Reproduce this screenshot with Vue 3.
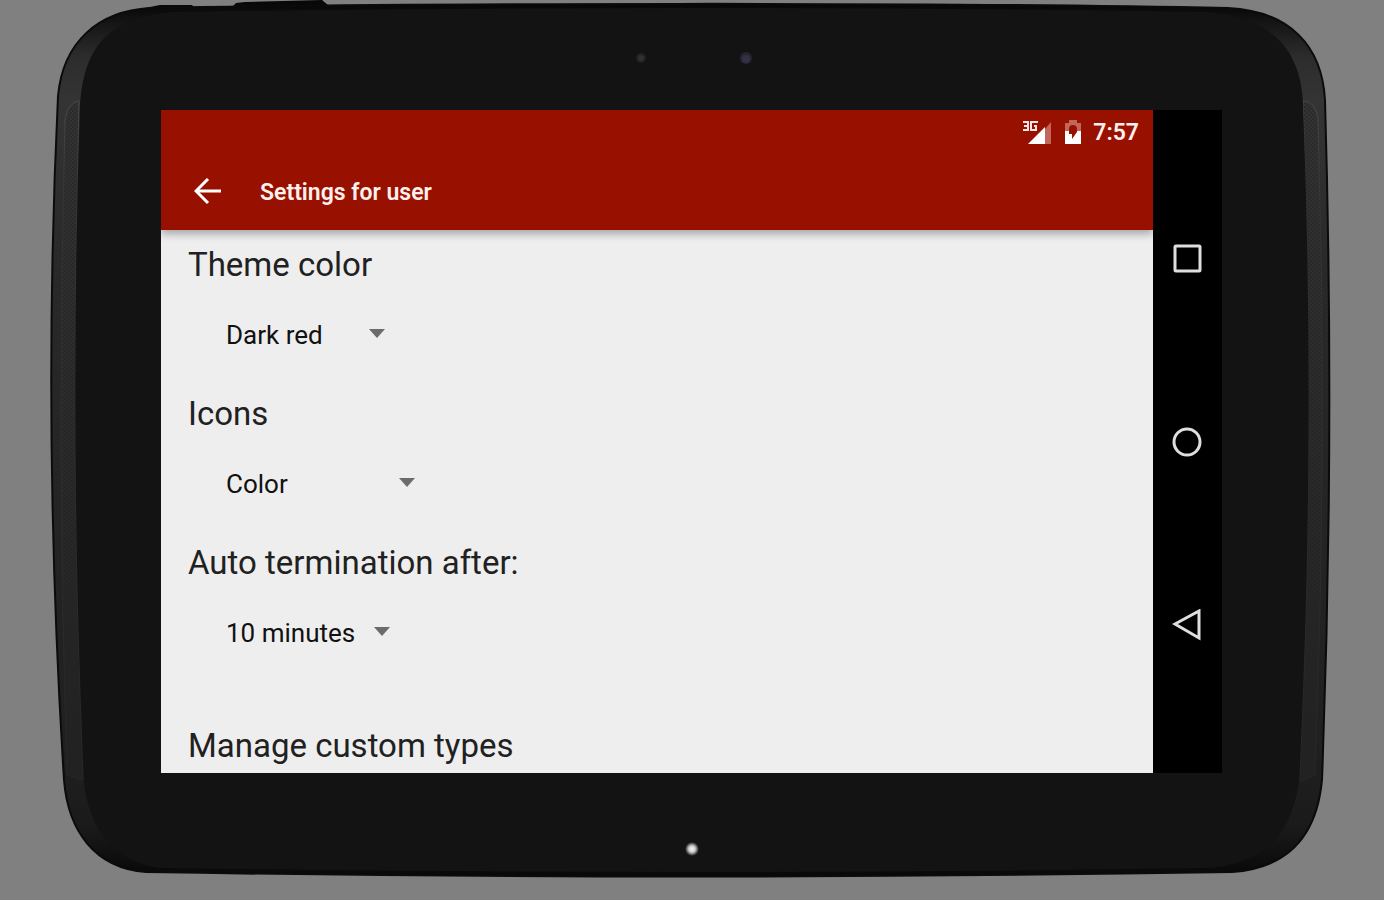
<script setup>
import { reactive } from 'vue'

const settings = reactive([
  { id: 'theme', label: 'Theme color', value: 'Dark red', options: ['Dark red', 'Dark blue', 'Green'], size: 'medium' },
  { id: 'icons', label: 'Icons', value: 'Color', options: ['Color', 'Monochrome'], size: 'wide' },
  { id: 'termination', label: 'Auto termination after:', value: '10 minutes', options: ['5 minutes', '10 minutes', '30 minutes'], size: 'regular' }
])
</script>

<template>
  <div class="stage">
    <svg class="shell" viewBox="0 0 1384 900" preserveAspectRatio="none" aria-hidden="true">
      <defs>
        <linearGradient id="rim" x1="0" y1="0" x2="0" y2="1">
          <stop offset="0" stop-color="#060606" />
          <stop offset="0.02" stop-color="#141414" />
          <stop offset="0.06" stop-color="#2c2c2c" />
          <stop offset="0.11" stop-color="#343434" />
          <stop offset="0.3" stop-color="#292929" />
          <stop offset="0.85" stop-color="#202020" />
          <stop offset="0.94" stop-color="#1b1b1b" />
          <stop offset="1" stop-color="#080808" />
        </linearGradient>
        <pattern id="mesh" width="4" height="4" patternUnits="userSpaceOnUse">
          <rect width="4" height="4" fill="#2b2b2b" />
          <circle cx="1" cy="1" r="0.8" fill="#403c3c" />
          <circle cx="3" cy="3" r="0.8" fill="#403c3c" />
        </pattern>
        <linearGradient id="meshfade" x1="0" y1="0" x2="0" y2="1">
          <stop offset="0" stop-color="#202020" stop-opacity="0" />
          <stop offset="1" stop-color="#202020" stop-opacity="0.9" />
        </linearGradient>
        <linearGradient id="meshedge" x1="0" y1="0" x2="0" y2="1">
          <stop offset="0" stop-color="#4a4848" />
          <stop offset="0.15" stop-color="#343434" />
          <stop offset="1" stop-color="#262626" />
        </linearGradient>
        <radialGradient id="led">
          <stop offset="0" stop-color="#f4f4f4" />
          <stop offset="0.45" stop-color="#d0d0d0" />
          <stop offset="1" stop-color="#131313" />
        </radialGradient>
      </defs>
      <path d="M145 8 L160 5 H192 L196 9 Z M232 7 L236 3 L245 2 L322 0 L328 5 Z" fill="#080808" />
      <path
        d="M150 8 C400 3 950 2 1228 8 C1290 11 1322 46 1325 100 Q1335 440 1322 780 C1317 834 1290 868 1232 872 Q690 881 146 872 C94 868 68 830 64 780 Q42 430 58 96 C63 42 98 11 150 8 Z"
        fill="url(#rim)" stroke="#0b0b0b" stroke-width="2"
      />
      <path d="M79 101 Q68 102 65 120 Q56 440 67 775 L83 780 Q69 440 79 101 Z" fill="url(#mesh)" />
      <path d="M79 101 Q68 102 65 120 Q56 440 67 775 L83 780 Q69 440 79 101 Z" fill="url(#meshfade)" stroke="url(#meshedge)" stroke-width="1" />
      <path d="M1303 101 Q1315 101 1318 118 Q1328 440 1315 775 L1300 781 Q1316 440 1303 101 Z" fill="url(#mesh)" />
      <path d="M1303 101 Q1315 101 1318 118 Q1328 440 1315 775 L1300 781 Q1316 440 1303 101 Z" fill="url(#meshfade)" stroke="url(#meshedge)" stroke-width="1" />
      <path
        d="M170 12 Q690 4 1208 12 C1278 18 1301 56 1303 104 Q1316 440 1299 782 C1291 835 1265 863 1210 868 Q690 876 160 868 C112 861 89 828 84 782 Q69 440 80 104 C84 50 105 19 170 12 Z"
        fill="#131313"
      />
      <circle cx="641" cy="58" r="5" fill="#222" />
      <circle cx="641" cy="58" r="3" fill="#303030" />
      <circle cx="746" cy="58" r="6" fill="#26262c" />
      <circle cx="746" cy="59" r="4" fill="#323048" />
      <circle cx="692" cy="849" r="7" fill="url(#led)" />
    </svg>

    <main class="screen">
      <section class="app">
        <header class="top">
          <div class="status">
            <svg class="signal" viewBox="0 0 30 26" aria-label="3G signal">
              <path d="M23 10 L29 3 V25 H23 Z" fill="#c2655b" />
              <path d="M6 25 L23 8 V25 Z" fill="#fff" />
              <g fill="none" stroke="#fbe4e1" stroke-width="2">
                <path d="M1 3 H6 V11 H1 M2 7 H6" />
                <path d="M15 4 V3 H9 V11 H14 V7 H12" />
              </g>
            </svg>
            <svg class="battery" viewBox="0 0 18 26" aria-label="Battery charging">
              <path d="M5 1 H13 V4 H17 V12 H1 V4 H5 Z" fill="#c2655b" />
              <path d="M1 12 H17 V25 H1 Z" fill="#fff" />
              <path d="M5 10 Q5 6 9 6 Q13 6 13 10 V13 L8 20 V15 H5 Z" fill="#981100" />
            </svg>
            <time>7:57</time>
          </div>
          <div class="toolbar">
            <button class="back" type="button" aria-label="Back">
              <svg viewBox="0 0 28 28"><path d="M27 13 H3 M14 1 L2 13 L14 25" fill="none" stroke="#fff" stroke-width="3" /></svg>
            </button>
            <h1>Settings for user</h1>
          </div>
        </header>
        <form class="settings" @submit.prevent>
          <div v-for="item in settings" :key="item.id" class="setting">
            <label class="heading" :for="item.id">{{ item.label }}</label>
            <div class="picker" :class="item.size">
              <select :id="item.id" v-model="item.value">
                <option v-for="option in item.options" :key="option">{{ option }}</option>
              </select>
              <svg class="caret" viewBox="0 0 16 9" aria-hidden="true"><path d="M0 0 H16 L8 9 Z" fill="#6b6b6b" /></svg>
            </div>
          </div>
          <h2 class="heading last">Manage custom types</h2>
        </form>
      </section>
      <nav class="keys">
        <button type="button" aria-label="Recent apps">
          <svg viewBox="0 0 32 32"><rect x="3" y="3" width="25" height="25" rx="1" /></svg>
        </button>
        <button type="button" aria-label="Home">
          <svg viewBox="0 0 32 32"><circle cx="15" cy="16" r="13" /></svg>
        </button>
        <button type="button" aria-label="Back">
          <svg viewBox="0 0 32 32"><path d="M27 2 V29 L3 15 Z" /></svg>
        </button>
      </nav>
    </main>
  </div>
</template>

<style>
body {
  margin: 0;
  background: #808080;
}
</style>

<style scoped>
.stage {
  position: relative;
  display: grid;
  grid-template-columns: minmax(0, 161fr) minmax(0, 1061fr) minmax(0, 162fr);
  padding: 110px 0 127px;
  box-sizing: border-box;
  min-height: 100vh;
  overflow: hidden;
  font-family: Roboto, "Noto Sans", sans-serif;
}
.shell {
  position: absolute;
  inset: 0;
  width: 100%;
  height: 100%;
}
.screen {
  position: relative;
  grid-column: 2;
  display: flex;
  background: #000;
}
.app {
  flex: 1;
  min-width: 0;
  display: flex;
  flex-direction: column;
  background: #eee;
}
.top {
  position: relative;
  background: #981100;
  color: #fff;
  box-shadow: 0 4px 8px rgba(0, 0, 0, 0.3);
  clip-path: inset(0 0 -14px 0);
}
.status {
  display: flex;
  align-items: center;
  justify-content: flex-end;
  height: 44px;
  padding-right: 14px;
}
.signal {
  width: 30px;
  height: 26px;
  margin-right: 12px;
}
.battery {
  width: 18px;
  height: 26px;
  margin-right: 11px;
}
time {
  font-size: 23px;
  font-weight: 600;
  color: #fff0ee;
}
.toolbar {
  display: flex;
  align-items: center;
  gap: 38px;
  height: 76px;
  padding-left: 33px;
}
button {
  padding: 0;
  border: 0;
  background: none;
  cursor: pointer;
}
button svg {
  display: block;
}
.back svg {
  width: 28px;
  height: 28px;
}
h1 {
  margin: 0;
  font-size: 23px;
  font-weight: 600;
  color: #fff0ee;
}
.settings {
  flex: 1;
  padding: 14px 27px 0;
}
.setting {
  padding-bottom: 30px;
}
.heading {
  display: block;
  margin: 0;
  font-size: 33px;
  font-weight: 400;
  line-height: 42px;
  color: #212121;
}
.last {
  padding-top: 34px;
}
.picker {
  position: relative;
  margin: 21px 0 0 38px;
  height: 56px;
}
.medium {
  width: 159px;
}
.wide {
  width: 189px;
}
.regular {
  width: 164px;
}
select {
  width: 100%;
  height: 100%;
  padding: 0;
  border: 0;
  background: none;
  appearance: none;
  font: 400 26px Roboto, "Noto Sans", sans-serif;
  color: #111;
}
.caret {
  position: absolute;
  right: 0;
  top: 22px;
  width: 16px;
  height: 9px;
  pointer-events: none;
}
.keys {
  width: 69px;
  display: flex;
  flex-direction: column;
  align-items: center;
  justify-content: center;
  gap: 151px;
}
.keys svg {
  width: 32px;
  height: 32px;
  fill: none;
  stroke: #dedede;
  stroke-width: 3;
}
</style>
